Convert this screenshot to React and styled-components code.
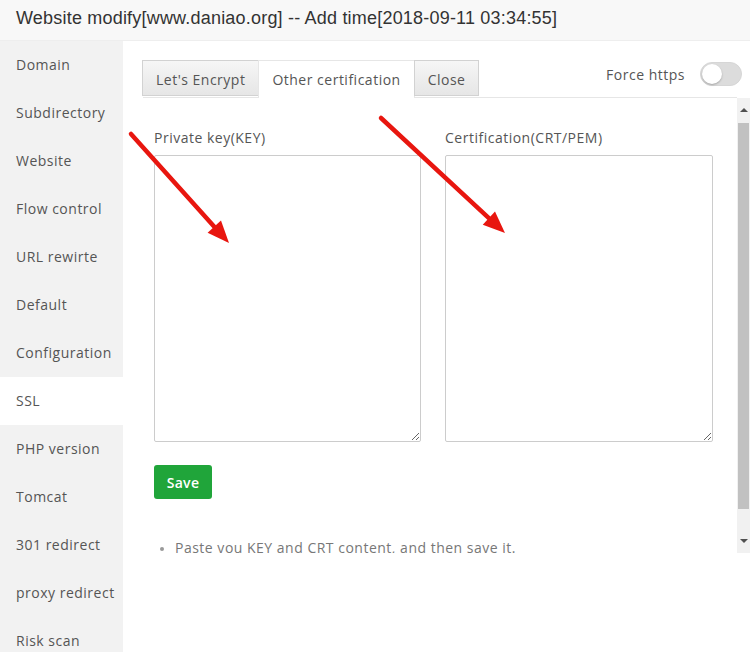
import React from 'react';
import styled, {createGlobalStyle} from 'styled-components';

const GlobalStyle = createGlobalStyle`
    html, body {
        margin: 0;
        padding: 0;
        background: #fff;
    }
    body {
        font-family: "Open Sans", "Noto Sans", sans-serif;
        color: #555;
        letter-spacing: 0.5px;
    }
`

const menu = [
    'Domain', 'Subdirectory', 'Website', 'Flow control', 'URL rewirte', 'Default',
    'Configuration', 'SSL', 'PHP version', 'Tomcat', '301 redirect', 'proxy redirect', 'Risk scan'
];

const tabs = [
    {name: "Let's Encrypt"},
    {name: 'Other certification', active: true},
    {name: 'Close'}
];

function Arrow({x1, y1, x2, y2}) {
    const len = Math.hypot(x2 - x1, y2 - y1);
    const ux = (x2 - x1) / len;
    const uy = (y2 - y1) / len;
    const bx = x2 - ux * 22;
    const by = y2 - uy * 22;
    const px = -uy * 9;
    const py = ux * 9;
    const pts = `${x2},${y2} ${bx + px},${by + py} ${bx - px},${by - py}`;
    return (
        <g>
            <line x1={x1} y1={y1} x2={bx} y2={by} stroke="#e8160f" strokeWidth="4.5" strokeLinecap="round"/>
            <polygon points={pts} fill="#e8160f"/>
        </g>
    );
}

class App extends React.Component {
    render() {
        return (
            <Page>
                <GlobalStyle/>
                <TitleBar>Website modify[www.daniao.org] -- Add time[2018-09-11 03:34:55]</TitleBar>
                <Body>
                    <Sidebar>
                        {menu.map(m => (
                            <MenuItem key={m} active={m === 'SSL'}>{m}</MenuItem>
                        ))}
                    </Sidebar>
                    <Main>
                        <TabBar>
                            {tabs.map(t => (
                                <Tab key={t.name} active={t.active}>{t.name}</Tab>
                            ))}
                            <Force>
                                Force https
                                <Toggle><Knob/></Toggle>
                            </Force>
                        </TabBar>
                        <ScrollRow>
                            <ScrollContent>
                                <Fields>
                                    <Field>
                                        <Label>Private key(KEY)</Label>
                                        <TextArea/>
                                    </Field>
                                    <Field>
                                        <Label>Certification(CRT/PEM)</Label>
                                        <TextArea/>
                                    </Field>
                                </Fields>
                                <SaveButton>Save</SaveButton>
                                <Tips>
                                    <li>Paste you KEY and CRT content, and then save it.</li>
                                </Tips>
                            </ScrollContent>
                            <Scrollbar>
                                <ScrollBtn><UpTri/></ScrollBtn>
                                <Thumb/>
                                <Track/>
                                <ScrollBtn><DownTri/></ScrollBtn>
                            </Scrollbar>
                        </ScrollRow>
                    </Main>
                </Body>
                <Overlay width="750" height="652" viewBox="0 0 750 652">
                    <Arrow x1={131} y1={134} x2={229} y2={243}/>
                    <Arrow x1={381} y1={118} x2={505} y2={233}/>
                </Overlay>
            </Page>
        );
    }
}

const Page = styled.div`
    position: relative;
    width: 750px;
    height: 652px;
    overflow: hidden;
    display: flex;
    flex-direction: column;
`

const TitleBar = styled.div`
    height: 40px;
    line-height: 36px;
    padding-left: 16px;
    background: #f8f8f8;
    border-bottom: 1px solid #eee;
    font-size: 18px;
    color: #333;
    white-space: nowrap;
    font-family: "Liberation Sans", sans-serif;
    letter-spacing: 0.2px;
`

const Body = styled.div`
    flex: 1;
    display: flex;
    min-height: 0;
`

const Sidebar = styled.div`
    width: 123px;
    flex-shrink: 0;
    background: #f2f2f2;
`

const MenuItem = styled.div`
    height: 48px;
    line-height: 47px;
    padding-left: 16px;
    font-size: 14px;
    color: #555;
    white-space: nowrap;
    background: ${p => (p.active ? '#fff' : 'transparent')};
`

const Main = styled.div`
    flex: 1;
    display: flex;
    flex-direction: column;
    padding: 19px 0 0 20px;
    background: #fff;
`

const TabBar = styled.div`
    display: flex;
    height: 37px;
    margin-right: 13px;
    border-bottom: 1px solid #e6e6e6;
`

const Tab = styled.div`
    height: ${p => (p.active ? '38px' : '36px')};
    padding: 0 13px;
    line-height: 37px;
    font-size: 14px;
    color: #555;
    box-sizing: border-box;
    border: 1px solid ${p => (p.active ? '#e6e6e6' : '#d2d2d2')};
    border-bottom: ${p => (p.active ? 'none' : '1px solid #d2d2d2')};
    background: ${p => (p.active ? '#fff' : 'linear-gradient(#f6f6f6, #e6e6e6)')};
    margin-left: -1px;
    white-space: nowrap;
`

const Force = styled.div`
    margin-left: auto;
    margin-right: -5px;
    display: flex;
    align-items: center;
    height: 26px;
    margin-top: 1px;
    gap: 15px;
    font-size: 14px;
    color: #555;
`

const Toggle = styled.div`
    width: 42px;
    height: 24px;
    box-sizing: border-box;
    border: 1px solid #d6d6d6;
    border-radius: 12px;
    background: #dcdcdc;
    display: flex;
    align-items: center;
    padding-left: 1px;
`

const Knob = styled.div`
    width: 20px;
    height: 20px;
    border-radius: 50%;
    background: #fff;
    box-shadow: 0 1px 2px rgba(0, 0, 0, 0.25);
`

const ScrollRow = styled.div`
    display: flex;
    height: 455px;
`

const ScrollContent = styled.div`
    flex: 1;
    overflow: hidden;
    padding: 30px 24px 0 11px;
`

const Fields = styled.div`
    display: grid;
    grid-template-columns: 267px 268px;
    column-gap: 24px;
`

const Field = styled.div`
    display: flex;
    flex-direction: column;
`

const Label = styled.div`
    font-size: 14px;
    line-height: 20px;
    color: #555;
    margin-bottom: 7px;
`

const TextArea = styled.textarea`
    height: 287px;
    box-sizing: border-box;
    border: 1px solid #ccc;
    border-radius: 2px;
    resize: both;
    margin: 0;
    outline: none;
`

const SaveButton = styled.button`
    margin-top: 23px;
    width: 58px;
    height: 34px;
    border: none;
    border-radius: 3px;
    background: #20a53a;
    color: #fff;
    font-family: "Open Sans", sans-serif;
    font-size: 14px;
    font-weight: 600;
    letter-spacing: 0.3px;
    padding: 0;
`

const Tips = styled.ul`
    margin: 39px 0 0;
    padding-left: 21px;
    font-size: 14px;
    line-height: 20px;
    color: #777;
    li::marker {
        color: #999;
        font-size: 12px;
    }
`

const Scrollbar = styled.div`
    width: 13px;
    background: #f1f1f1;
    display: flex;
    flex-direction: column;
`

const ScrollBtn = styled.div`
    height: 24px;
    display: flex;
    align-items: center;
    justify-content: center;
`

const UpTri = styled.div`
    border-left: 4px solid transparent;
    border-right: 4px solid transparent;
    border-bottom: 4px solid #505050;
`

const DownTri = styled.div`
    border-left: 4px solid transparent;
    border-right: 4px solid transparent;
    border-top: 4px solid #505050;
`

const Thumb = styled.div`
    margin: 1px 1px 0;
    height: 386px;
    background: #c1c1c1;
`

const Track = styled.div`
    flex: 1;
`

const Overlay = styled.svg`
    position: absolute;
    left: 0;
    top: 0;
    pointer-events: none;
`

export default App;
